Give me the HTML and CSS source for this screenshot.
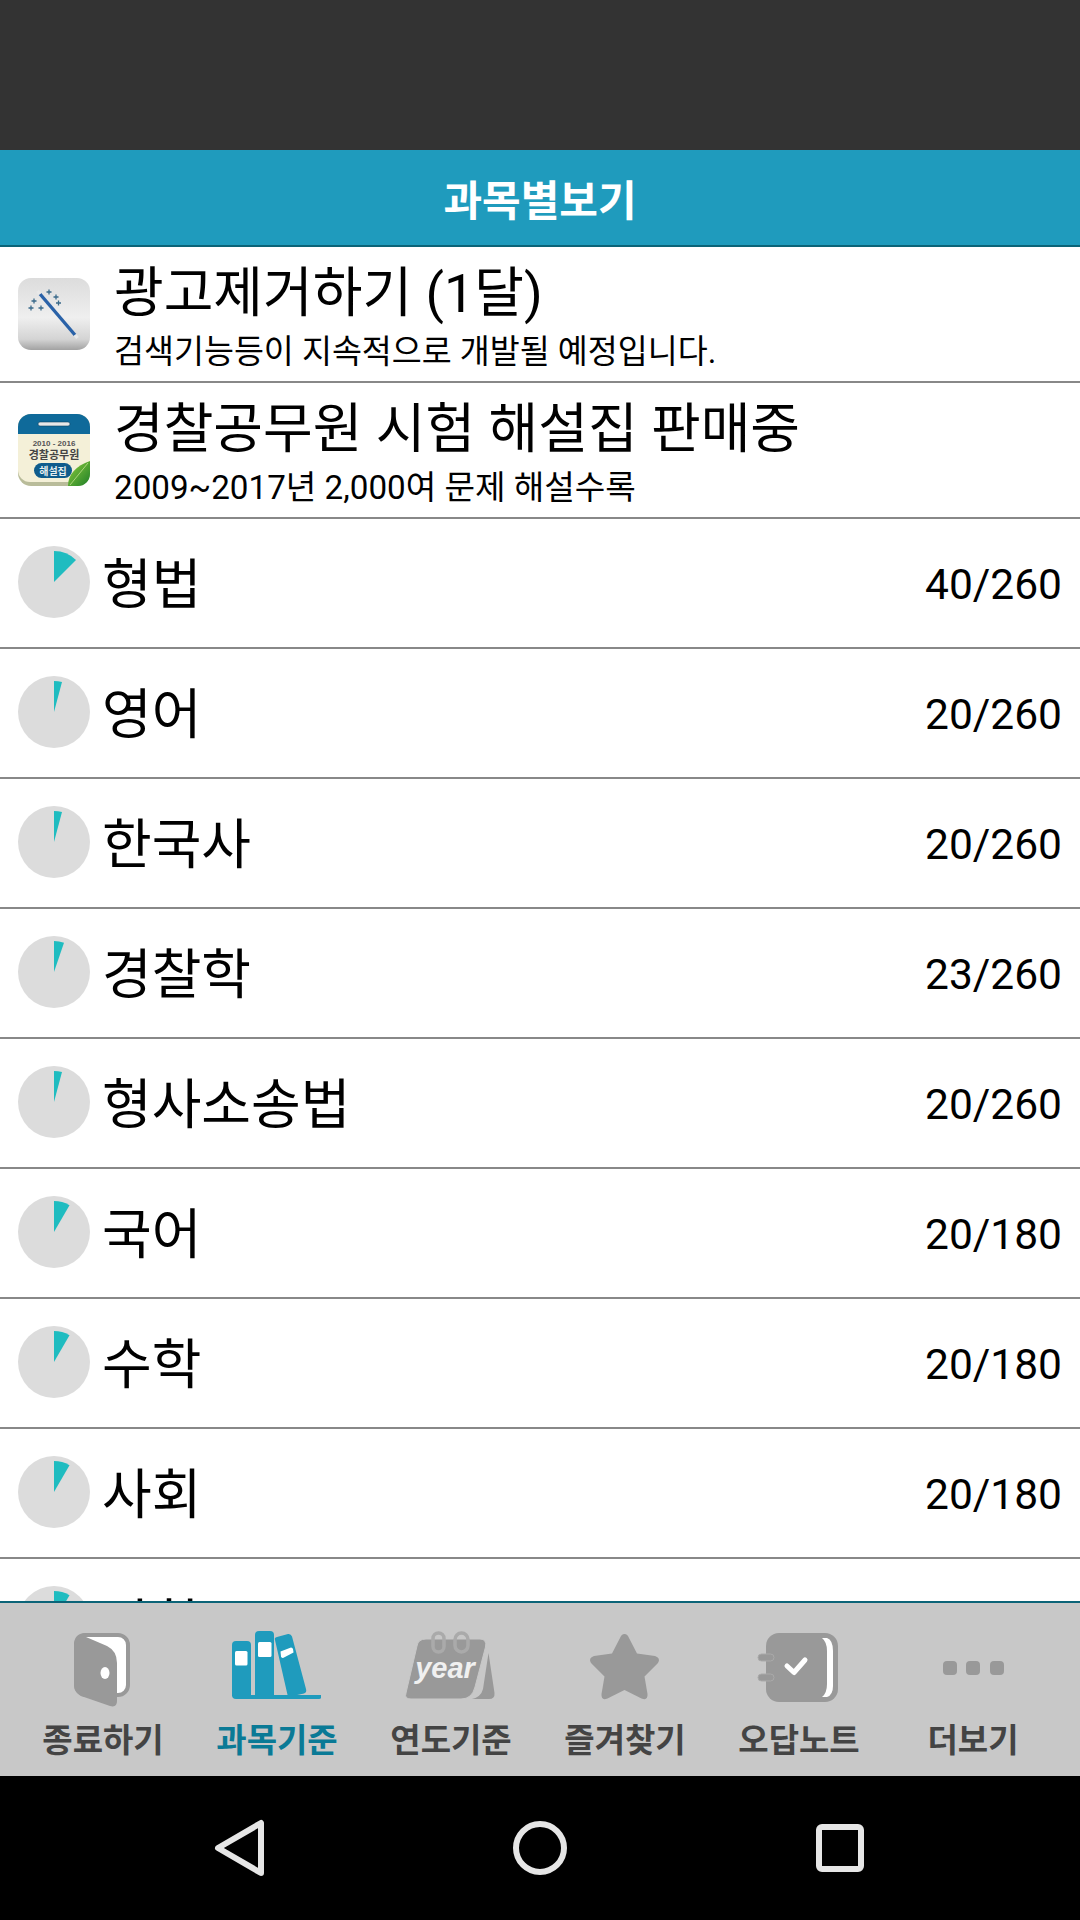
FILE: index.html
```html
<!DOCTYPE html>
<html lang="ko">
<head>
<meta charset="utf-8">
<title>과목별보기</title>
<link rel="stylesheet" href="styles.css">
</head>
<body>
<div class="app">
  <div class="status"></div>
  <header class="head">과목별보기</header>
  <main class="list">
    <div class="ad">
      <svg class="ad-ico" viewBox="0 0 72 72">
        <defs><linearGradient id="gw" x1="0" y1="0" x2="0" y2="1"><stop offset="0" stop-color="#dcdcdc"/><stop offset=".55" stop-color="#efefef"/><stop offset=".85" stop-color="#d4d4d4"/><stop offset="1" stop-color="#a2a2a2"/></linearGradient></defs>
        <rect width="72" height="72" rx="13" fill="url(#gw)"/>
        <path d="M22 16 57 57" stroke="#2a62a8" stroke-width="3.4"/>
        <path d="M19.500 13 22 16M57 57 59.500 60" stroke="#e8e8e8" stroke-width="3.400"/>
        <path d="M31 11.500v5M28.500 14h5M38 16.500v5M35.500 19h5M40.500 22.500v5M38 25h5M16 20.500v5M13.500 23h5M13 27.500v5M10.500 30h5M23 27.500v5M20.500 30h5" stroke="#3a6a8a" stroke-width="1.300"/>
      </svg>
      <div class="ad-txt">
        <div class="ad-title">광고제거하기 (1달)</div>
        <div class="ad-sub">검색기능등이 지속적으로 개발될 예정입니다.</div>
      </div>
    </div>
    <div class="ad">
      <svg class="ad-ico" viewBox="0 0 72 72">
        <defs><linearGradient id="gl" x1="0" y1="0" x2="1" y2="1"><stop offset="0" stop-color="#8fce3c"/><stop offset="1" stop-color="#1e7f28"/></linearGradient></defs>
        <rect width="72" height="72" rx="13" fill="#b9bc9a"/>
        <path d="M0 20V13A13 13 0 0 1 13 0H59A13 13 0 0 1 72 13V20Z" fill="#0f6a9a"/>
        <path d="M0 20H72V56A12 12 0 0 1 60 68H12A12 12 0 0 1 0 56Z" fill="#f4f0d8"/>
        <rect x="20" y="8" width="32" height="4" rx="2" fill="#e8e8e8" stroke="#0a3f60" stroke-width=".6"/>
        <text class="ic-y" x="36" y="32" text-anchor="middle">2010 - 2016</text>
        <text class="ic-n" x="36" y="45" text-anchor="middle">경찰공무원</text>
        <rect x="16" y="49" width="38" height="15" rx="7.500" fill="#0f5c8c"/>
        <text class="ic-s" x="35" y="61" text-anchor="middle">해설집</text>
        <path d="M50 72C50 60 58 52 72 47V60A12 12 0 0 1 60 72Z" fill="url(#gl)"/>
        <path d="M52 71 70 49" stroke="#cfe89a" stroke-width=".7"/>
      </svg>
      <div class="ad-txt">
        <div class="ad-title">경찰공무원 시험 해설집 판매중</div>
        <div class="ad-sub ad-sub-num">2009~2017년 2,000여 문제 해설수록</div>
      </div>
    </div>
    <div class="row"><svg class="pie" viewBox="0 0 72 72"><circle cx="36" cy="36" r="36"/><path d="M36 36V5A31 31 0 0 1 58 14Z"/></svg><div class="name">형법</div><div class="num">40/260</div></div>
    <div class="row"><svg class="pie" viewBox="0 0 72 72"><circle cx="36" cy="36" r="36"/><path d="M36 36V5A31 31 0 0 1 44 6Z"/></svg><div class="name">영어</div><div class="num">20/260</div></div>
    <div class="row"><svg class="pie" viewBox="0 0 72 72"><circle cx="36" cy="36" r="36"/><path d="M36 36V5A31 31 0 0 1 44 6Z"/></svg><div class="name">한국사</div><div class="num">20/260</div></div>
    <div class="row"><svg class="pie" viewBox="0 0 72 72"><circle cx="36" cy="36" r="36"/><path d="M36 36V5A31 31 0 0 1 46 6.700Z"/></svg><div class="name">경찰학</div><div class="num">23/260</div></div>
    <div class="row"><svg class="pie" viewBox="0 0 72 72"><circle cx="36" cy="36" r="36"/><path d="M36 36V5A31 31 0 0 1 44 6Z"/></svg><div class="name">형사소송법</div><div class="num">20/260</div></div>
    <div class="row"><svg class="pie" viewBox="0 0 72 72"><circle cx="36" cy="36" r="36"/><path d="M36 36V5A31 31 0 0 1 51.500 9.200Z"/></svg><div class="name">국어</div><div class="num">20/180</div></div>
    <div class="row"><svg class="pie" viewBox="0 0 72 72"><circle cx="36" cy="36" r="36"/><path d="M36 36V5A31 31 0 0 1 51.500 9.200Z"/></svg><div class="name">수학</div><div class="num">20/180</div></div>
    <div class="row"><svg class="pie" viewBox="0 0 72 72"><circle cx="36" cy="36" r="36"/><path d="M36 36V5A31 31 0 0 1 51.500 9.200Z"/></svg><div class="name">사회</div><div class="num">20/180</div></div>
    <div class="row"><svg class="pie" viewBox="0 0 72 72"><circle cx="36" cy="36" r="36"/><path d="M36 36V5A31 31 0 0 1 51.500 9.200Z"/></svg><div class="name">과학</div><div class="num">20/180</div></div>
  </main>
  <nav class="tabs">
    <div class="tab">
      <svg class="tab-ico" viewBox="0 0 100 80">
        <rect x="23" y="4" width="52" height="60" rx="10" fill="#fff" stroke="#999" stroke-width="4"/>
        <path d="M21 14Q21 2 33 2V6L54 15Q64 20 64 32V70Q64 77 57 75L31 66Q21 62 21 54Z" fill="#999"/>
        <ellipse cx="52" cy="42" rx="4.500" ry="6" fill="#fff"/>
      </svg>
      <span class="lbl">종료하기</span>
    </div>
    <div class="tab active">
      <svg class="tab-ico" viewBox="0 0 100 80">
        <g fill="#1f9bbd">
          <path d="M5 65V14Q5 10 9 10H20Q24 10 24 14V65Z"/>
          <path d="M28 65V4Q28 0 32 0H43Q47 0 47 4V65Z"/>
          <path d="M48 9Q47 6.500 50 6L61 3Q64 2.600 65 5.500L79 58Q80 61.500 77 62.500L61 66Z"/>
          <path d="M5 64H94V66.500Q94 68 92 68H9Q5 68 5 64Z"/>
        </g>
        <g fill="#fff">
          <rect x="8" y="20" width="12.500" height="14.500" rx="1.500"/>
          <rect x="31" y="11" width="13.500" height="15" rx="1.500"/>
          <path d="M53.500 20.500 64 16.500Q65.500 16.500 66 18L66.500 21.500 56 27Q54.500 27 54 25.500Z"/>
        </g>
      </svg>
      <span class="lbl">과목기준</span>
    </div>
    <div class="tab">
      <svg class="tab-ico" viewBox="0 0 100 80">
        <path d="M87.500 22 93.500 62Q94 68 88 68H71Q80 66 82 58Z" fill="#999"/>
        <path d="M16 15Q17 8 25 8H79Q86 8 84.500 16L74 56Q71 68 60 68H10Q3 68 5 62Z" fill="#999" stroke="#c8c8c8" stroke-width="1"/>
        <rect x="32" y="2" width="11" height="19" rx="5.500" fill="none" stroke="#aaa" stroke-width="3.500"/>
        <rect x="54" y="2" width="13" height="19" rx="6.500" fill="none" stroke="#aaa" stroke-width="3.500"/>
        <text class="yr" x="44" y="47" text-anchor="middle">year</text>
      </svg>
      <span class="lbl">연도기준</span>
    </div>
    <div class="tab">
      <svg class="tab-ico" viewBox="0 0 100 80">
        <path d="M49.500 3Q52.500 3 54 7L62 22.500 80 25Q86 27 83 32L69.500 45.500 72.500 63Q73 70 66.500 67.500L49.500 59 32.500 67.500Q26 70 26.500 63L29.500 45.500 16 32Q13 27 19 25L37 22.500 45 7Q46.500 3 49.500 3Z" fill="#999"/>
      </svg>
      <span class="lbl">즐겨찾기</span>
    </div>
    <div class="tab">
      <svg class="tab-ico" viewBox="0 0 100 80">
        <rect x="17" y="2" width="72" height="69" rx="13" fill="#999"/>
        <path d="M73 7H78Q84 9 84 20V55Q84 64 78 66H73Q78 62 78 53V20Q78 11 73 7Z" fill="#fff"/>
        <rect x="9" y="23" width="16" height="7" rx="3.500" fill="#999" stroke="#aaa"/>
        <rect x="9" y="43" width="16" height="7" rx="3.500" fill="#999" stroke="#aaa"/>
        <path d="M38 35 45 41.500 56 29" fill="none" stroke="#fff" stroke-width="5" stroke-linecap="round" stroke-linejoin="round"/>
      </svg>
      <span class="lbl">오답노트</span>
    </div>
    <div class="tab">
      <svg class="tab-ico" viewBox="0 0 100 80">
        <rect x="20" y="30" width="14" height="14" rx="4" fill="#999"/>
        <rect x="43" y="30" width="14" height="14" rx="4" fill="#999"/>
        <rect x="67" y="30" width="14" height="14" rx="4" fill="#999"/>
      </svg>
      <span class="lbl">더보기</span>
    </div>
  </nav>
  <footer class="sysbar">
    <svg class="sys-ico" viewBox="0 0 60 60"><path d="M51 5V55L8 30Z" fill="none" stroke="#e6e6e6" stroke-width="6" stroke-linejoin="round"/></svg>
    <svg class="sys-ico" viewBox="0 0 60 60"><circle cx="30" cy="30" r="24" fill="none" stroke="#e6e6e6" stroke-width="6"/></svg>
    <svg class="sys-ico" viewBox="0 0 60 60"><rect x="9" y="9" width="42" height="42" rx="3" fill="none" stroke="#e6e6e6" stroke-width="6"/></svg>
  </footer>
</div>
</body>
</html>
```
FILE: styles.css
```css
* { box-sizing: border-box; }
html, body { margin: 0; padding: 0; }
body { font-family: Roboto, "Noto Sans CJK KR", sans-serif; color: #000; background: #fff; }
.app { width: 1080px; height: 1920px; display: flex; flex-direction: column; overflow: hidden; }
.status { height: 150px; background: #333; flex: none; }
.head { height: 97px; flex: none; background: #1f9bbd; border-bottom: 2px solid #0b6478; color: #fff; font-size: 42px; font-weight: 700; display: flex; align-items: center; justify-content: center; }
.list { flex: 1; min-height: 0; overflow: hidden; }
.ad { height: 136px; border-bottom: 2px solid #888; display: flex; align-items: center; padding-left: 18px; gap: 24px; }
.ad-ico { width: 72px; height: 72px; flex: none; }
.ad-txt { display: flex; flex-direction: column; padding-top: 6px; }
.ad-title { font-size: 54px; line-height: 64px; }
.ad-sub { font-size: 32.600px; line-height: 40px; margin-top: 6px; }
.ad-sub-num { font-size: 33.200px; }
.row { height: 130px; border-bottom: 2px solid #888; display: flex; align-items: center; padding: 0 18px 2px 18px; gap: 12px; }
.pie { width: 72px; height: 72px; flex: none; }
.pie circle { fill: #dcdcdc; }
.pie path { fill: #1fbcc0; }
.name { font-size: 54px; flex: 1; padding-bottom: 3px; }
.num { font-size: 42.500px; padding-top: 4px; }
.tabs { height: 175px; flex: none; background: #c8c8c8; border-top: 2px solid #0b6478; display: grid; grid-template-columns: repeat(6, 174px); padding: 0 16px; }
.tab { display: flex; flex-direction: column; align-items: center; padding-top: 28px; gap: 10px; }
.tab-ico { width: 100px; height: 80px; flex: none; }
.lbl { font-size: 33px; font-weight: 700; color: #444; line-height: 40px; }
.active .lbl { color: #0a7a96; }
.yr { font: italic 700 29px "Liberation Sans", sans-serif; fill: #f0f0f0; }
.ic-y { font: 700 8px "Liberation Sans", sans-serif; fill: #555; }
.ic-n { font: 700 11px "Noto Sans CJK KR", sans-serif; fill: #444; }
.ic-s { font: 700 10px "Noto Sans CJK KR", sans-serif; fill: #e8f0f0; }
.sysbar { height: 144px; flex: none; background: #000; display: grid; grid-template-columns: repeat(3, 1fr); padding: 0 90px; justify-items: center; align-items: center; }
.sys-ico { width: 60px; height: 60px; }
```
